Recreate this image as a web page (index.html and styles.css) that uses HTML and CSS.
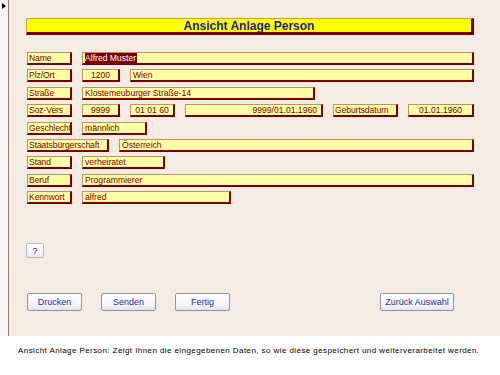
FILE: index.html
```html
<!DOCTYPE html>
<html lang="de">
<head>
    <meta charset="UTF-8">
    <meta name="viewport" content="width=device-width, initial-scale=1.0">
    <title>Ansicht Anlage Person</title>
    <link rel="stylesheet" href="styles.css">
</head>
<body>

    <div class="window">
        <div class="selector">
            <span class="marker"></span>
        </div>

        <div class="form">
            <div class="title">Ansicht Anlage Person</div>

            <div class="rows">
                <div class="row">
                    <span class="box label">Name</span>
                    <span class="box value w-full"><span class="selected">Alfred Muster</span></span>
                </div>
                <div class="row">
                    <span class="box label">Plz/Ort</span>
                    <span class="box value center w-plz">1200</span>
                    <span class="box value w-full">Wien</span>
                </div>
                <div class="row">
                    <span class="box label">Straße</span>
                    <span class="box value w-street">Klostemeuburger Straße-14</span>
                </div>
                <div class="row">
                    <span class="box label">Soz-Vers</span>
                    <span class="box value center w-plz">9999</span>
                    <span class="box value center w-short">01 01 60</span>
                    <span class="box value right w-svnr">9999/01.01.1960</span>
                    <span class="box label w-geb">Geburtsdatum</span>
                    <span class="box value center w-date">01.01.1960</span>
                </div>
                <div class="row">
                    <span class="box label">Geschlecht</span>
                    <span class="box value w-sex">männlich</span>
                </div>
                <div class="row">
                    <span class="box label w-citizen">Staatsbürgerschaft</span>
                    <span class="box value w-full">Österreich</span>
                </div>
                <div class="row">
                    <span class="box label">Stand</span>
                    <span class="box value w-stand">verheiratet</span>
                </div>
                <div class="row">
                    <span class="box label">Beruf</span>
                    <span class="box value w-full">Programmierer</span>
                </div>
                <div class="row">
                    <span class="box label">Kennwort</span>
                    <span class="box value w-pass">alfred</span>
                </div>
            </div>

            <button type="button" class="btn help">?</button>

            <div class="buttons">
                <button type="button" class="btn">Drucken</button>
                <button type="button" class="btn">Senden</button>
                <button type="button" class="btn">Fertig</button>
                <button type="button" class="btn back">Zurück Auswahl</button>
            </div>
        </div>
    </div>

    <p class="caption">Ansicht Anlage Person: Zeigt Ihnen die eingegebenen Daten, so wie diese gespeichert und weiterverarbeitet werden.</p>

</body>
</html>
```

FILE: styles.css
```css
body {
    margin: 0;
    background: #ffffff;
    font-family: "Liberation Sans", Arial, sans-serif;
    width: 500px;
    height: 375px;
    overflow: hidden;
}
.window {
    display: flex;
    height: 336px;
}
.selector {
    width: 9px;
    background: #f8f5f0;
    border-right: 1px solid #8c8478;
    padding: 3px 0 0 2px;
    box-sizing: border-box;
}
.marker {
    display: block;
    width: 0;
    height: 0;
    border-top: 3px solid transparent;
    border-bottom: 3px solid transparent;
    border-left: 4px solid #000;
}
.form {
    flex: 1;
    background: #f4ece2;
    padding: 18px 26px 0 17px;
}
.title {
    background: #ffff00;
    border-top: 1px solid #c8a050;
    border-left: 1px solid #c8a050;
    border-right: 3px solid #7a0000;
    border-bottom: 3px solid #7a0000;
    box-sizing: border-box;
    height: 17px;
    line-height: 14px;
    text-align: center;
    font-weight: bold;
    font-size: 12px;
    color: #1e1e96;
}
.rows {
    display: flex;
    flex-direction: column;
    gap: 4.4px;
    margin-top: 17px;
}
.row {
    display: flex;
    gap: 10px;
}
.box {
    display: block;
    height: 13px;
    box-sizing: border-box;
    background: #ffffa6;
    border-top: 1px solid #b8946a;
    border-left: 1px solid #b8946a;
    border-right: 2px solid #7a0000;
    border-bottom: 2px solid #7a0000;
    font-size: 8.6px;
    line-height: 10px;
    color: #7a0000;
    padding: 0 2px;
    white-space: nowrap;
    overflow: hidden;
}
.label {
    width: 45px;
    margin-left: 1px;
    padding: 0 0 0 1px;
    overflow: visible;
    letter-spacing: -0.1px;
}
.value {
    flex: none;
}
.center {
    text-align: center;
}
.right {
    text-align: right;
    padding-right: 4px;
}
.selected {
    background: #7a0000;
    color: #ffffff;
    padding: 0 1px 1px 0;
}
.w-full { flex: 1; }
.w-plz { width: 38px; }
.w-street { width: 233px; }
.w-short { width: 45px; }
.w-svnr { width: 138px; }
.w-geb { width: 65px; margin-left: 0; }
.w-date { width: 66px; }
.w-sex { width: 65px; }
.w-citizen { width: 82px; }
.w-stand { width: 83px; }
.w-pass { width: 149px; }

.btn {
    display: block;
    height: 18px;
    padding: 0;
    font-family: "Liberation Sans", Arial, sans-serif;
    font-size: 9px;
    color: #2a2aa0;
    background: linear-gradient(#ffffff, #f4f4f6 70%, #e4e4ea);
    border: 1px solid #8a96a8;
    border-radius: 2px;
    box-sizing: border-box;
}
.help {
    width: 18px;
    height: 15px;
    margin-top: 39px;
    border-color: #b8b8c0;
}
.buttons {
    display: flex;
    gap: 19px;
    margin-top: 35px;
    padding-left: 1px;
}
.buttons .btn {
    width: 55px;
}
.buttons .back {
    width: 74px;
    margin-left: auto;
    margin-right: 20px;
}
.caption {
    margin: 10px 0 0 18px;
    font-size: 8px;
    letter-spacing: 0.42px;
    color: #000;
}
```
